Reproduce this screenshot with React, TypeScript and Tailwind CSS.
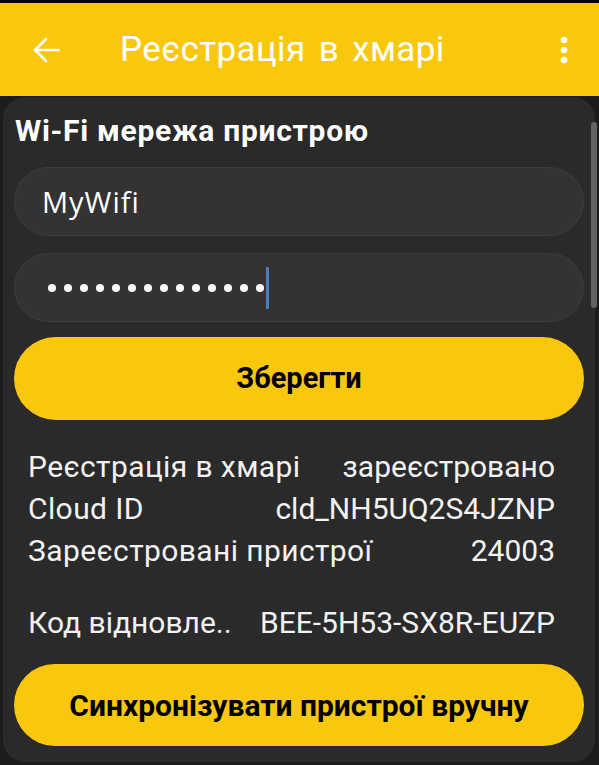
import React from "react";

const rows = [
  { label: "Реєстрація в хмарі", value: "зареєстровано" },
  { label: "Cloud ID", value: "cld_NH5UQ2S4JZNP" },
  { label: "Зареєстровані пристрої", value: "24003" },
];

export default function App() {
  return (
    <div className="h-[765px] w-[599px] overflow-hidden bg-[#1c1c1c] font-['Roboto',sans-serif]">
      <div className="h-[3px] bg-black" />

      {/* app bar */}
      <div className="flex h-[93px] items-center bg-[#f9c80e] pl-[33px] pr-[31px]">
        <svg width="27" height="26" viewBox="0 0 27 26" fill="none" stroke="white" strokeWidth="2.6" strokeLinecap="round" strokeLinejoin="round">
          <path d="M25.5 13H2" />
          <path d="M13 2 2 13l11 11" />
        </svg>
        <div className="ml-[60px] flex-1 text-[35px] leading-none tracking-[0.4px] text-white [word-spacing:4px]">
          Реєстрація в хмарі
        </div>
        <svg width="8" height="28" viewBox="0 0 8 28" fill="white">
          <circle cx="4" cy="4" r="3.3" />
          <circle cx="4" cy="14" r="3.3" />
          <circle cx="4" cy="24" r="3.3" />
        </svg>
      </div>

      {/* card */}
      <div className="relative mx-[3px] mt-[1px] h-[665px] w-[592px] rounded-[22px] bg-[#2a2a2a] px-[11px] pt-[14px]">
        <div className="absolute right-[-2px] top-[25px] h-[186px] w-[6px] rounded-full bg-[#646464]" />

        <div className="pl-[1px] text-[30px] font-bold leading-[40px] tracking-[0.7px] text-white">Wi-Fi мережа пристрою</div>

        <div className="mt-[16px] flex h-[69px] items-center rounded-full border border-[#3d3d3d] bg-[#333333] pl-[27px] font-['Open_Sans',sans-serif] text-[29px] tracking-[1px] text-white">
          MyWifi
        </div>

        <div className="mt-[17px] flex h-[69px] items-center rounded-full border border-[#3d3d3d] bg-[#333333] pl-[33px]">
          <div className="flex gap-[8px]">
            {Array.from({ length: 14 }).map((_, i) => (
              <div key={i} className="h-[8px] w-[8px] rounded-full bg-white" />
            ))}
          </div>
          <div className="ml-[2px] h-[42px] w-[3px] bg-[#4b80b8]" />
        </div>

        <button className="mt-[15px] flex h-[83px] w-full items-center justify-center rounded-full bg-[#f9c80e] text-[29px] font-bold text-black">
          Зберегти
        </button>

        {/* info */}
        <div className="mt-[25px] pl-[14px] pr-[29px] text-[30px] text-[#f2f2f2]">
          {rows.map(r => (
            <div key={r.label} className="flex h-[42px] items-center justify-between">
              <span className="tracking-[0.4px]">{r.label}</span>
              <span>{r.value}</span>
            </div>
          ))}
          <div className="mt-[30px] flex h-[42px] items-center justify-between">
            <span>Код відновле..</span>
            <span>BEE-5H53-SX8R-EUZP</span>
          </div>
        </div>

        <button className="mt-[21px] flex h-[82px] w-full items-center justify-center rounded-full bg-[#f9c80e] text-[30px] font-bold text-black">
          Синхронізувати пристрої вручну
        </button>
      </div>
    </div>
  );
}
